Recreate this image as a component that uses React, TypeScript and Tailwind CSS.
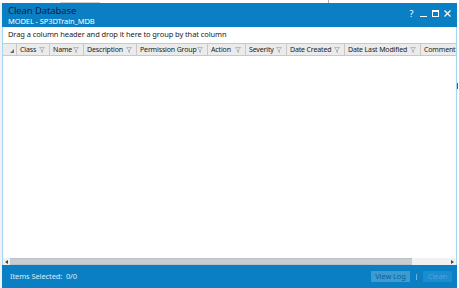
import React from 'react';

const columns = [
  { label: 'Class', w: 33 },
  { label: 'Name', w: 34 },
  { label: 'Description', w: 53 },
  { label: 'Permission Group', w: 71 },
  { label: 'Action', w: 38 },
  { label: 'Severity', w: 41 },
  { label: 'Date Created', w: 58 },
  { label: 'Date Last Modified', w: 76 },
  { label: 'Comment', w: 60 },
];

const Funnel = () => (
  <svg width="6" height="6" viewBox="0 0 6 6" className="shrink-0">
    <path d="M0.5 0.5 H5.5 L3.5 3 V5.5 L2.5 5 V3 Z" fill="none" stroke="#a9adb3" strokeWidth="0.8" />
  </svg>
);

const App = () => {
  return (
    <div className="w-[459px] h-[288px] bg-white overflow-hidden flex flex-col" style={{ fontFamily: '"Noto Sans", "Open Sans", sans-serif' }}>
      {/* bit of the window behind */}
      <div className="h-[3px] flex relative">
        <div className="ml-[60px] w-[40px] border-b border-[#d0d0d0]" />
        <div className="ml-[228px] w-px bg-[#b0b0b0]" />
      </div>

      <div className="flex flex-1 min-h-0">
        <div className="w-[2px] bg-[#f2f2f2]" />
        <div className="w-[455px] flex flex-col">
          {/* title bar */}
          <div className="h-[24px] bg-[#0a7fc4] flex items-start justify-between pl-[6px] pr-[6px]">
            <div className="flex flex-col pt-[1px]">
              <span className="text-[9.5px] leading-[13px] text-[#0c2238] tracking-[-0.1px]">Clean Database</span>
              <span className="text-[7.5px] leading-[9px] text-white tracking-[-0.1px]">MODEL - SP3DTrain_MDB</span>
            </div>
            <div className="flex items-center gap-[5px] pt-[6px] text-white text-[9px] leading-none">
              <span className="w-[7px] text-center">?</span>
              <span className="w-[7px] h-[7px] flex items-end"><span className="w-[7px] h-[1.5px] bg-white" /></span>
              <span className="w-[7px] h-[7px] border border-white border-t-2" />
              <svg width="7" height="7" viewBox="0 0 7 7">
                <path d="M0.5 0.5 L6.5 6.5 M6.5 0.5 L0.5 6.5" stroke="white" strokeWidth="1.2" />
              </svg>
            </div>
          </div>

          {/* content */}
          <div className="flex-1 flex flex-col border-l border-r border-[#a6d6ee] bg-white min-h-0">
            <div className="h-[16px] flex items-center pl-[5px] text-[7.5px] text-[#222] tracking-[-0.1px]">
              Drag a column header and drop it here to group by that column
            </div>
            <div className="h-[13px] flex overflow-hidden bg-[#ebebeb] border-y border-[#c8c8c8]">
              <div className="w-[14px] shrink-0 flex items-end justify-end pr-[2px] pb-[2px] border-r border-[#c8c8c8]">
                <svg width="4" height="4" viewBox="0 0 4 4"><path d="M4 0 V4 H0 Z" fill="#6b6b6b" /></svg>
              </div>
              {columns.map((c) => (
                <div
                  key={c.label}
                  className="shrink-0 flex items-center justify-between pl-[3px] pr-[4px] border-r border-[#c8c8c8] text-[7px] text-[#222] leading-none whitespace-nowrap tracking-[-0.15px]"
                  style={{ width: c.w }}
                >
                  <span>{c.label}</span>
                  <Funnel />
                </div>
              ))}
            </div>
            <div className="flex-1" />
            {/* horizontal scrollbar */}
            <div className="h-[7px] flex items-stretch bg-[#f0f0f0]">
              <div className="w-[7px] flex items-center justify-center">
                <svg width="3" height="4" viewBox="0 0 3 4"><path d="M3 0 V4 L0 2 Z" fill="#444" /></svg>
              </div>
              <div className="w-[402px] bg-[#c9cdd1] border-y border-[#bcc1c5]" />
              <div className="flex-1" />
              <div className="w-[7px] flex items-center justify-center">
                <svg width="3" height="4" viewBox="0 0 3 4"><path d="M0 0 V4 L3 2 Z" fill="#444" /></svg>
              </div>
            </div>
          </div>

          {/* footer */}
          <div className="h-[23px] bg-[#0a7fc4] flex items-center justify-between pl-[8px] pr-[5px]">
            <span className="text-[7.5px] text-[#dbeaf5] tracking-[-0.1px]">Items Selected:&nbsp; 0/0</span>
            <div className="flex items-center">
              <div className="w-[39px] h-[11px] bg-[#3c9bd1] flex items-center justify-center text-[7.5px] text-[#0c5f93] tracking-[-0.1px]">View Log</div>
              <div className="w-px h-[6px] bg-[#6fb5de] ml-[6px] mr-[6px]" />
              <div className="w-[29px] h-[11px] bg-[#1b8ccd] flex items-center justify-center text-[7.5px] text-[#4aa6dc] tracking-[-0.1px]">Clean</div>
            </div>
          </div>
        </div>
        <div className="flex-1 bg-white flex flex-col">
          <div className="h-[80px]" />
          <div className="w-px h-[6px] bg-[#555]" />
        </div>
      </div>
    </div>
  );
};

export default App;
